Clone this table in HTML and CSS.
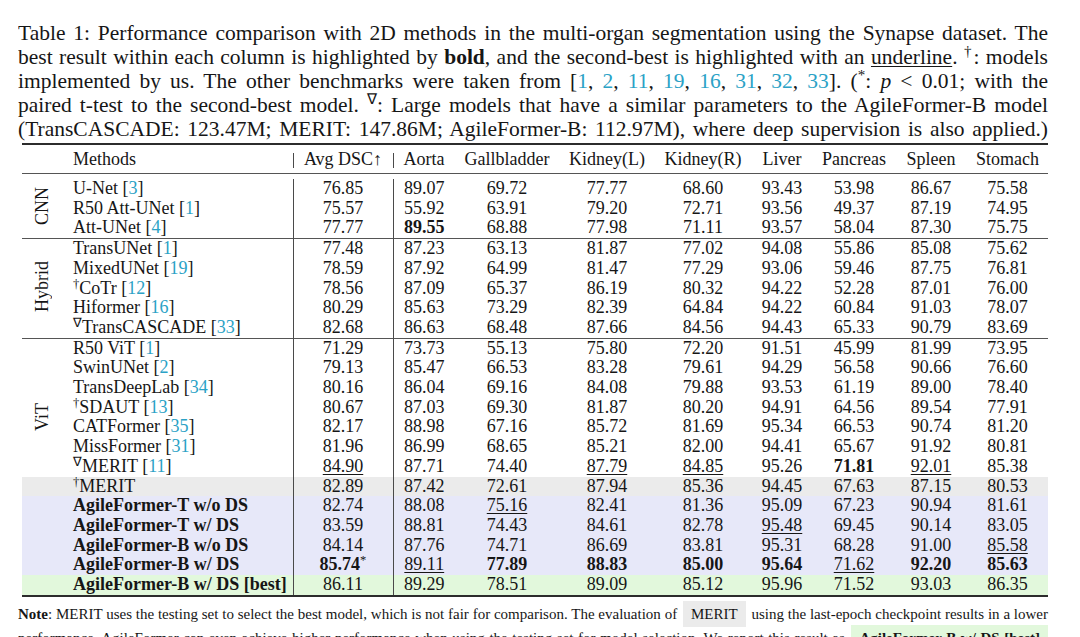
FILE: index.html
```html
<!DOCTYPE html>
<html lang="en">
<head>
<meta charset="utf-8">
<title>Table 1</title>
<link rel="stylesheet" href="styles.css">
</head>
<body>
<div class="page">
  <p class="caption">
    <span class="ln">Table 1: Performance comparison with 2D methods in the multi-organ segmentation using the Synapse dataset. The</span>
    <span class="ln">best result within each column is highlighted by <b>bold</b>, and the second-best is highlighted with an <span class="ul">underline</span>. <sup>†</sup>: models</span>
    <span class="ln">implemented by us. The other benchmarks were taken from [<span class="ref">1</span>, <span class="ref">2</span>, <span class="ref">11</span>, <span class="ref">19</span>, <span class="ref">16</span>, <span class="ref">31</span>, <span class="ref">32</span>, <span class="ref">33</span>]. (<sup>*</sup>: <i>p</i> &lt; 0.01; with the</span>
    <span class="ln">paired t-test to the second-best model. <sup>∇</sup>: Large models that have a similar parameters to the AgileFormer-B model</span>
    <span class="ln">(TransCASCADE: 123.47M; MERIT: 147.86M; AgileFormer-B: 112.97M), where deep supervision is also applied.)</span>
  </p>

  <table class="results">
    <colgroup>
      <col class="c-grp"><col class="c-meth"><col class="c-avg"><col class="c-aorta"><col class="c-gall">
      <col class="c-kl"><col class="c-kr"><col class="c-liver"><col class="c-panc"><col class="c-spleen"><col class="c-stom">
    </colgroup>
    <thead>
      <tr>
        <th colspan="2" class="m sep">Methods</th>
        <th class="sep">Avg DSC↑</th>
        <th>Aorta</th><th>Gallbladder</th><th>Kidney(L)</th><th>Kidney(R)</th><th>Liver</th><th>Pancreas</th><th>Spleen</th><th>Stomach</th>
      </tr>
    </thead>
    <tbody>
      <tr class="gap"><td colspan="11"></td></tr>
      <tr><td class="grp" rowspan="3"><span class="rot">CNN</span></td><td class="m sep">U-Net [<span class="ref">3</span>]</td><td class="sep">76.85</td><td>89.07</td><td>69.72</td><td>77.77</td><td>68.60</td><td>93.43</td><td>53.98</td><td>86.67</td><td>75.58</td></tr>
      <tr><td class="m sep">R50 Att-UNet [<span class="ref">1</span>]</td><td class="sep">75.57</td><td>55.92</td><td>63.91</td><td>79.20</td><td>72.71</td><td>93.56</td><td>49.37</td><td>87.19</td><td>74.95</td></tr>
      <tr><td class="m sep">Att-UNet [<span class="ref">4</span>]</td><td class="sep">77.77</td><td><b>89.55</b></td><td>68.88</td><td>77.98</td><td>71.11</td><td>93.57</td><td>58.04</td><td>87.30</td><td>75.75</td></tr>

      <tr class="rule"><td class="grp" rowspan="5"><span class="rot">Hybrid</span></td><td class="m sep">TransUNet [<span class="ref">1</span>]</td><td class="sep">77.48</td><td>87.23</td><td>63.13</td><td>81.87</td><td>77.02</td><td>94.08</td><td>55.86</td><td>85.08</td><td>75.62</td></tr>
      <tr><td class="m sep">MixedUNet [<span class="ref">19</span>]</td><td class="sep">78.59</td><td>87.92</td><td>64.99</td><td>81.47</td><td>77.29</td><td>93.06</td><td>59.46</td><td>87.75</td><td>76.81</td></tr>
      <tr><td class="m sep"><sup>†</sup>CoTr [<span class="ref">12</span>]</td><td class="sep">78.56</td><td>87.09</td><td>65.37</td><td>86.19</td><td>80.32</td><td>94.22</td><td>52.28</td><td>87.01</td><td>76.00</td></tr>
      <tr><td class="m sep">Hiformer [<span class="ref">16</span>]</td><td class="sep">80.29</td><td>85.63</td><td>73.29</td><td>82.39</td><td>64.84</td><td>94.22</td><td>60.84</td><td>91.03</td><td>78.07</td></tr>
      <tr><td class="m sep"><sup>∇</sup>TransCASCADE [<span class="ref">33</span>]</td><td class="sep">82.68</td><td>86.63</td><td>68.48</td><td>87.66</td><td>84.56</td><td>94.43</td><td>65.33</td><td>90.79</td><td>83.69</td></tr>

      <tr class="rule"><td class="grp grp-vit" rowspan="7"><span class="rot">ViT</span></td><td class="m sep">R50 ViT [<span class="ref">1</span>]</td><td class="sep">71.29</td><td>73.73</td><td>55.13</td><td>75.80</td><td>72.20</td><td>91.51</td><td>45.99</td><td>81.99</td><td>73.95</td></tr>
      <tr><td class="m sep">SwinUNet [<span class="ref">2</span>]</td><td class="sep">79.13</td><td>85.47</td><td>66.53</td><td>83.28</td><td>79.61</td><td>94.29</td><td>56.58</td><td>90.66</td><td>76.60</td></tr>
      <tr><td class="m sep">TransDeepLab [<span class="ref">34</span>]</td><td class="sep">80.16</td><td>86.04</td><td>69.16</td><td>84.08</td><td>79.88</td><td>93.53</td><td>61.19</td><td>89.00</td><td>78.40</td></tr>
      <tr><td class="m sep"><sup>†</sup>SDAUT [<span class="ref">13</span>]</td><td class="sep">80.67</td><td>87.03</td><td>69.30</td><td>81.87</td><td>80.20</td><td>94.91</td><td>64.56</td><td>89.54</td><td>77.91</td></tr>
      <tr><td class="m sep">CATFormer [<span class="ref">35</span>]</td><td class="sep">82.17</td><td>88.98</td><td>67.16</td><td>85.72</td><td>81.69</td><td>95.34</td><td>66.53</td><td>90.74</td><td>81.20</td></tr>
      <tr><td class="m sep">MissFormer [<span class="ref">31</span>]</td><td class="sep">81.96</td><td>86.99</td><td>68.65</td><td>85.21</td><td>82.00</td><td>94.41</td><td>65.67</td><td>91.92</td><td>80.81</td></tr>
      <tr><td class="m sep"><sup>∇</sup>MERIT [<span class="ref">11</span>]</td><td class="sep"><span class="ul">84.90</span></td><td>87.71</td><td>74.40</td><td><span class="ul">87.79</span></td><td><span class="ul">84.85</span></td><td>95.26</td><td><b>71.81</b></td><td><span class="ul">92.01</span></td><td>85.38</td></tr>

      <tr class="grey"><td></td><td class="m sep"><sup>†</sup>MERIT</td><td class="sep">82.89</td><td>87.42</td><td>72.61</td><td>87.94</td><td>85.36</td><td>94.45</td><td>67.63</td><td>87.15</td><td>80.53</td></tr>
      <tr class="blue"><td></td><td class="m sep"><b>AgileFormer-T w/o DS</b></td><td class="sep">82.74</td><td>88.08</td><td><span class="ul">75.16</span></td><td>82.41</td><td>81.36</td><td>95.09</td><td>67.23</td><td>90.94</td><td>81.61</td></tr>
      <tr class="blue"><td></td><td class="m sep"><b>AgileFormer-T w/ DS</b></td><td class="sep">83.59</td><td>88.81</td><td>74.43</td><td>84.61</td><td>82.78</td><td><span class="ul">95.48</span></td><td>69.45</td><td>90.14</td><td>83.05</td></tr>
      <tr class="blue"><td></td><td class="m sep"><b>AgileFormer-B w/o DS</b></td><td class="sep">84.14</td><td>87.76</td><td>74.71</td><td>86.69</td><td>83.81</td><td>95.31</td><td>68.28</td><td>91.00</td><td><span class="ul">85.58</span></td></tr>
      <tr class="blue"><td></td><td class="m sep"><b>AgileFormer-B w/ DS</b></td><td class="sep"><b>85.74</b><sup>*</sup></td><td><span class="ul">89.11</span></td><td><b>77.89</b></td><td><b>88.83</b></td><td><b>85.00</b></td><td><b>95.64</b></td><td><span class="ul">71.62</span></td><td><b>92.20</b></td><td><b>85.63</b></td></tr>
      <tr class="green last"><td></td><td class="m sep"><b>AgileFormer-B w/ DS [best]</b></td><td class="sep">86.11</td><td>89.29</td><td>78.51</td><td>89.09</td><td>85.12</td><td>95.96</td><td>71.52</td><td>93.03</td><td>86.35</td></tr>
    </tbody>
  </table>

  <p class="note">
    <span class="ln"><b>Note</b>: MERIT uses the testing set to select the best model, which is not fair for comparison. The evaluation of <span class="chip">MERIT</span> using the last-epoch checkpoint results in a lower</span>
    <span class="ln">performance. AgileFormer can even achieve higher performance when using the testing set for model selection. We report this result as <span class="chip chip-green">AgileFormer-B w/ DS [best]</span></span>
  </p>
</div>
</body>
</html>
```

FILE: styles.css
```css
html, body {
  background: #ffffff;
}

body {
  margin: 21px 0 0 18px;
  font-family: "Liberation Serif", "Times New Roman", serif;
  color: #161616;
  overflow: hidden;
}

.page {
  width: 1030px;
}

.caption {
  margin: 0;
  padding-bottom: 2px;
  font-size: 21.5px;
  line-height: 24px;
  word-spacing: -1px;
}

.ln {
  display: block;
  text-align: justify;
  text-align-last: justify;
}

sup {
  font-size: 0.7em;
  line-height: 0;
  vertical-align: 0.5em;
}

.ul {
  text-decoration: underline;
  text-decoration-thickness: 1px;
  text-underline-offset: 2px;
}

.ref {
  color: #2ba2c6;
}

/* table */
.results {
  margin-left: 4px;
  width: 1026px;
  border-collapse: collapse;
  table-layout: fixed;
  font-size: 18px;
}

.c-grp { width: 40px; }
.c-meth { width: 231px; }
.c-avg { width: 100px; }
.c-aorta { width: 62px; }
.c-gall { width: 104px; }
.c-kl { width: 96px; }
.c-kr { width: 96px; }
.c-liver { width: 62px; }
.c-panc { width: 82px; }
.c-spleen { width: 72px; }
.c-stom { width: 81px; }

.results th {
  position: relative;
  height: 28px;
  padding: 0;
  font-weight: normal;
  text-align: center;
  white-space: nowrap;
  border-top: 2px solid #2c2c2c;
  border-bottom: 1px solid #555;
}

.results th.m {
  text-align: left;
  padding-left: 51px;
}

.results th.sep::after {
  content: "";
  position: absolute;
  right: -1px;
  top: 8px;
  bottom: 5px;
  width: 1px;
  background: #4a4a4a;
}

.results td {
  height: 19.7px;
  padding: 0;
  line-height: 19.7px;
  text-align: center;
  white-space: nowrap;
}

.results td.m {
  text-align: left;
  padding-left: 11px;
}

.results td.sep {
  border-right: 1px solid #4a4a4a;
}

.results tr.gap td {
  height: 5px;
  line-height: 0;
}

.results tr.rule td {
  border-top: 1px solid #555;
}

.results td.grp {
  vertical-align: middle;
  text-align: center;
}

.results td.grp-vit {
  padding-top: 24px;
}

.rot {
  display: inline-block;
  writing-mode: vertical-rl;
  transform: rotate(180deg);
  line-height: 1;
}

.results tr.grey td { background: #ebebeb; }
.results tr.blue td { background: #e7e8f9; }
.results tr.green td { background: #e2f8dc; }

.results tr.last td {
  border-bottom: 2px solid #2c2c2c;
}

/* note */
.note {
  margin: 5px 0 0;
  font-size: 15px;
  line-height: 24px;
  word-spacing: -0.5px;
}

.chip {
  background: #ebebeb;
  padding: 5px 8px;
  margin: 0 2px;
}

.chip-green {
  background: #e2f8dc;
  font-weight: bold;
  margin-right: 0;
}
```
